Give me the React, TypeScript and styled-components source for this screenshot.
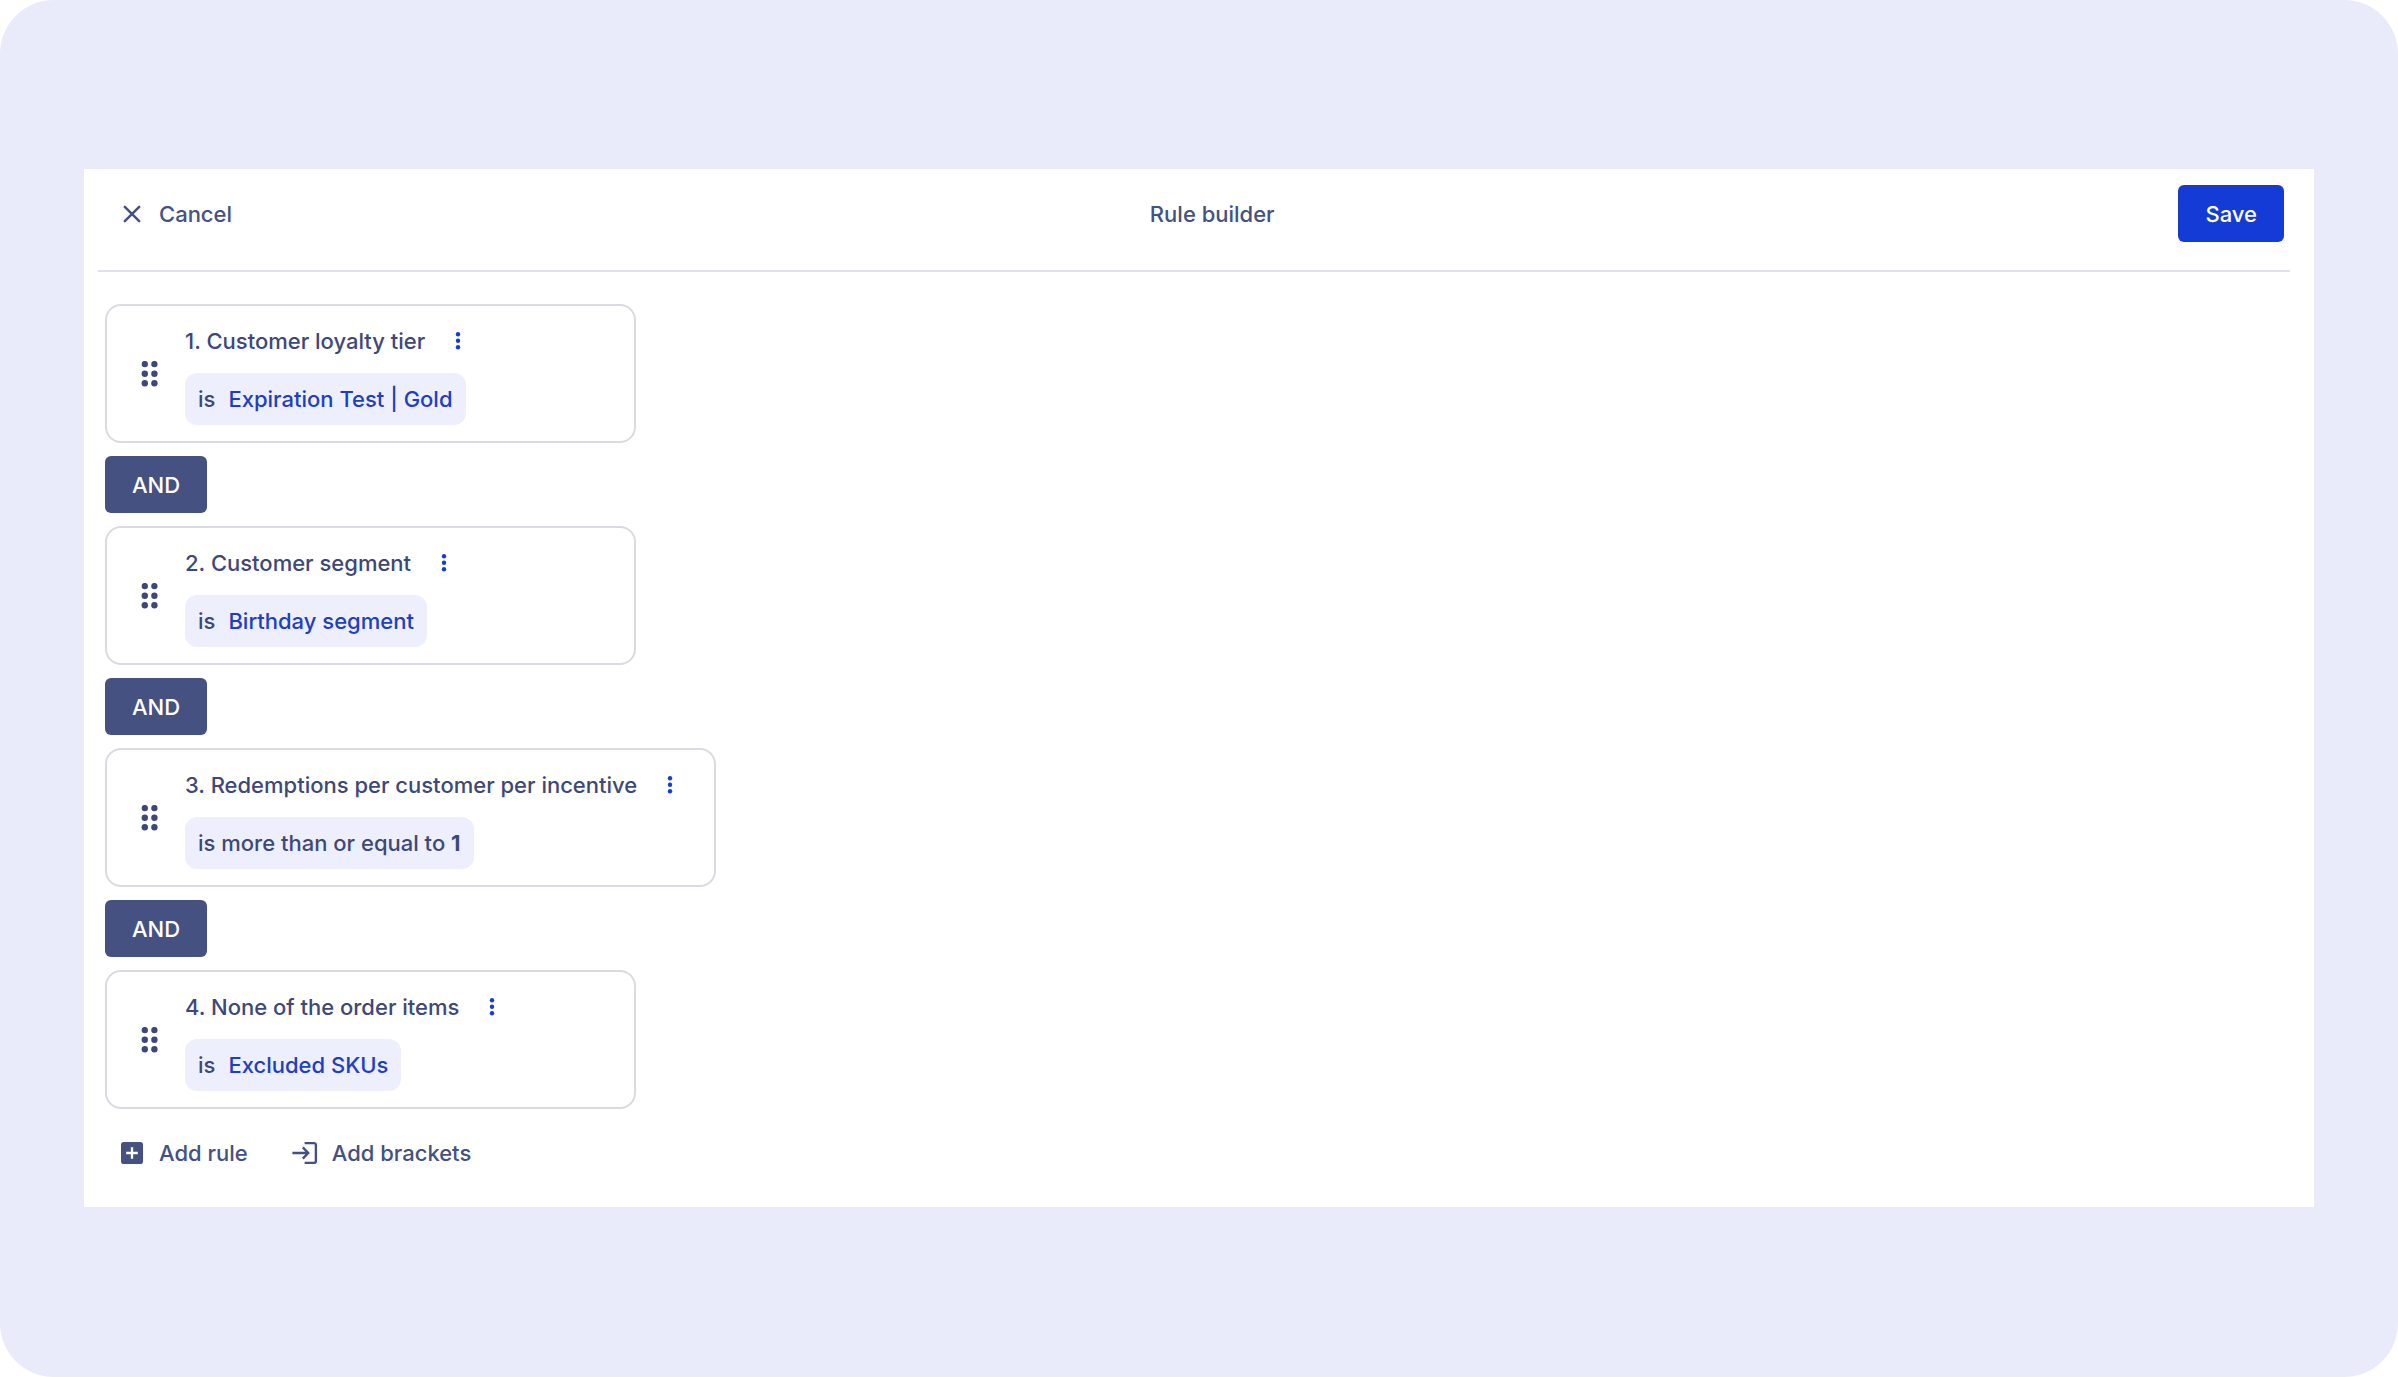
import React from "react";
import styled, { createGlobalStyle } from "styled-components";

const color = {
  backdrop: "#e9ebfb",
  surface: "#ffffff",
  ink: "#445181",
  inkStrong: "#3d4878",
  blue: "#153bd6",
  link: "#1e40bd",
  chip: "#edeffd",
  line: "#d9dbe3",
  divider: "#e0e1e9",
};

const GlobalStyle = createGlobalStyle`
  *, *::before, *::after { box-sizing: border-box; }
  body {
    margin: 0;
    background: #ffffff;
    color: ${color.ink};
    font: 500 22px/30px Inter, "Liberation Sans", sans-serif;
  }
  button { font: inherit; cursor: pointer; }
`;

const Backdrop = styled.div`
  min-height: 100vh;
  padding: 169px 84px 168px;
  border-radius: 54px;
  background: ${color.backdrop};
`;

const Panel = styled.main`
  padding-bottom: 26px;
  background: ${color.surface};
`;

const Header = styled.header`
  display: flex;
  align-items: center;
  justify-content: space-between;
  margin: 0 24px 0 14px;
  padding: 16px 6px 28px 7px;
  border-bottom: 2px solid ${color.divider};
`;

const Title = styled.h1`
  margin: 0;
  font: inherit;
`;

const TextButton = styled.button`
  display: flex;
  align-items: center;
  gap: 14px;
  height: 57px;
  padding: 0 14px;
  border: 0;
  background: none;
  color: ${color.ink};
`;

const SolidButton = styled.button<{ $tone: "primary" | "muted" }>`
  height: 57px;
  padding: 0 27px;
  border: 0;
  border-radius: 6px;
  background: ${(p) => (p.$tone === "primary" ? color.blue : color.ink)};
  color: #ffffff;
`;

const Rules = styled.section`
  display: flex;
  flex-direction: column;
  align-items: flex-start;
  gap: 13px;
  padding: 32px 21px 0;
`;

const Card = styled.article`
  display: flex;
  align-items: center;
  gap: 22px;
  min-width: 531px;
  padding: 16px 31px 16px 30px;
  border: 2px solid ${color.line};
  border-radius: 16px;
`;

const CardBody = styled.div`
  display: flex;
  flex-direction: column;
  align-items: flex-start;
  gap: 13px;
`;

const CardHead = styled.div`
  display: flex;
  align-items: center;
  gap: 20px;
  height: 38px;
`;

const CardTitle = styled.h2`
  margin: 0;
  font: inherit;
  color: ${color.inkStrong};
`;

const IconButton = styled.button<{ $accent?: boolean }>`
  display: flex;
  padding: 0;
  border: 0;
  background: none;
  color: ${(p) => (p.$accent ? color.blue : color.inkStrong)};
`;

const Chip = styled.div`
  display: flex;
  align-items: center;
  gap: 13px;
  height: 52px;
  padding: 0 13px;
  border-radius: 12px;
  background: ${color.chip};
  color: ${color.inkStrong};

  a {
    color: ${color.link};
    text-decoration: none;
  }
  strong { font-weight: 700; }
`;

const Actions = styled.footer`
  display: flex;
  gap: 16px;
  padding: 15px 21px 0;
`;

const Icon = styled.svg.attrs({ width: 26, height: 26, viewBox: "0 0 26 26", "aria-hidden": true })`
  display: block;
  flex: none;
`;

const CloseIcon = () => (
  <Icon fill="none" stroke="currentColor" strokeWidth="2.5" strokeLinecap="round">
    <path d="M5.8 5.8 20.2 20.2M20.2 5.8 5.8 20.2" />
  </Icon>
);

const GripIcon = () => (
  <Icon fill="currentColor">
    {[3.1, 12.7, 22.3].map((y) => (
      <React.Fragment key={y}>
        <circle cx="7.8" cy={y} r="3.2" />
        <circle cx="17.4" cy={y} r="3.2" />
      </React.Fragment>
    ))}
  </Icon>
);

const MoreIcon = () => (
  <Icon fill="currentColor">
    {[6.2, 12.7, 19.2].map((y) => (
      <circle key={y} cx="13" cy={y} r="2.2" />
    ))}
  </Icon>
);

const PlusBoxIcon = () => (
  <Icon>
    <rect x="2" y="2" width="22" height="22" rx="2.8" fill="currentColor" />
    <path d="M13 7.2v11.6M7.2 13h11.6" stroke="#fff" strokeWidth="2.3" />
  </Icon>
);

const BracketsIcon = () => (
  <Icon fill="none" stroke="currentColor" strokeWidth="2.4">
    <path d="M12.6 3.1H22a1.9 1.9 0 0 1 1.9 1.9v16a1.9 1.9 0 0 1-1.9 1.9h-9.4" />
    <path d="M0.4 13h15.4M10.8 7.4l5.4 5.6-5.4 5.6" />
  </Icon>
);

type Rule = { title: string; target?: string; text?: string; value?: string };

const rules: Rule[] = [
  { title: "Customer loyalty tier", target: "Expiration Test | Gold" },
  { title: "Customer segment", target: "Birthday segment" },
  { title: "Redemptions per customer per incentive", text: "is more than or equal to", value: "1" },
  { title: "None of the order items", target: "Excluded SKUs" },
];

const RuleCard = ({ rule, index }: { rule: Rule; index: number }) => (
  <Card>
    <IconButton type="button" aria-label={`Reorder rule ${index}`}>
      <GripIcon />
    </IconButton>
    <CardBody>
      <CardHead>
        <CardTitle>
          {index}. {rule.title}
        </CardTitle>
        <IconButton $accent type="button" aria-label={`Options for rule ${index}`}>
          <MoreIcon />
        </IconButton>
      </CardHead>
      <Chip>
        {rule.target ? (
          <>
            <span>is</span>
            <a href="#rule">{rule.target}</a>
          </>
        ) : (
          <span>
            {rule.text} <strong>{rule.value}</strong>
          </span>
        )}
      </Chip>
    </CardBody>
  </Card>
);

export default function App() {
  return (
    <>
      <GlobalStyle />
      <Backdrop>
        <Panel>
          <Header>
            <TextButton type="button">
              <CloseIcon />
              Cancel
            </TextButton>
            <Title>Rule builder</Title>
            <SolidButton $tone="primary" type="button">
              Save
            </SolidButton>
          </Header>
          <Rules>
            {rules.map((rule, i) => (
              <React.Fragment key={rule.title}>
                {i > 0 && (
                  <SolidButton $tone="muted" type="button">
                    AND
                  </SolidButton>
                )}
                <RuleCard rule={rule} index={i + 1} />
              </React.Fragment>
            ))}
          </Rules>
          <Actions>
            <TextButton type="button">
              <PlusBoxIcon />
              Add rule
            </TextButton>
            <TextButton type="button">
              <BracketsIcon />
              Add brackets
            </TextButton>
          </Actions>
        </Panel>
      </Backdrop>
    </>
  );
}
